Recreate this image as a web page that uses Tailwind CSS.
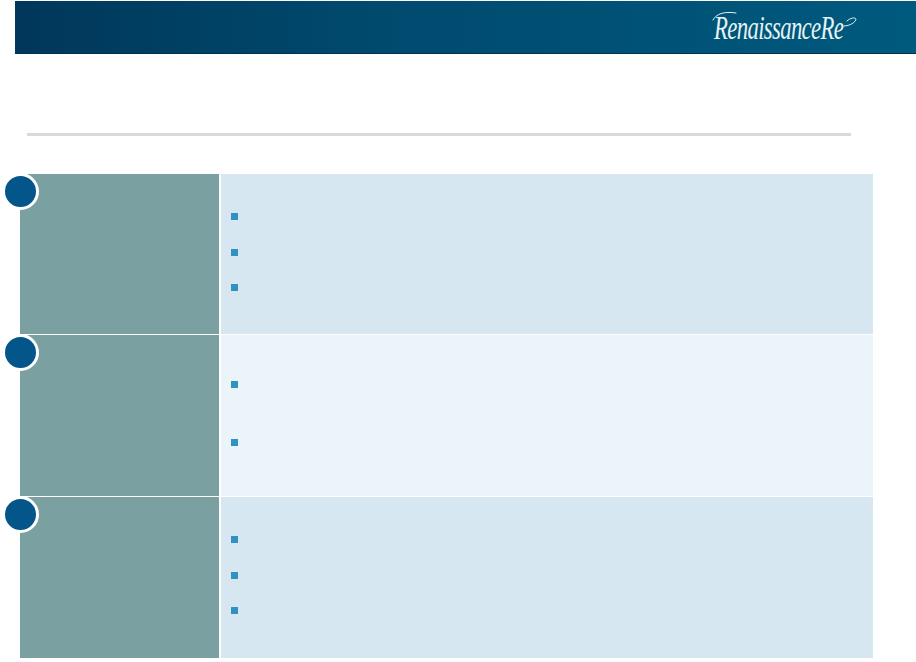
<!DOCTYPE html>
<html lang="en">
  <head>
    <meta charset="UTF-8" />
    <meta name="viewport" content="width=device-width, initial-scale=1.0" />
    <title>RenaissanceRe</title>
    <script src="https://cdn.jsdelivr.net/npm/@tailwindcss/browser@4"></script>
  </head>
  <body class="bg-white w-[916px] h-[662px] overflow-hidden">
    <!-- header bar -->
    <header class="mt-px ml-[15px] h-[53px] flex items-center justify-end bg-gradient-to-r from-[#00375a] via-[#004a6e] via-40% to-[#005a7e] border-b border-[#003350]">
      <div class="relative mr-[58px] mt-[2px] w-[144px] h-[34px]">
        <span class="block origin-left scale-x-[.67] font-['Liberation_Serif',serif] italic text-[34px] leading-[34px] tracking-[-1px] text-[#e4f3f6] whitespace-nowrap">RenaissanceRe</span>
        <!-- swash on the R and the trailing e -->
        <svg class="absolute left-[-2px] top-[-2px]" width="150" height="34" viewBox="0 0 150 34" fill="none" stroke="#e4f3f6" stroke-width="1" stroke-linecap="round">
          <path d="M1 11C4 5 12 2 24 4" />
          <path d="M132 17C138 17 144 13 144 10C143 8 138 9 135 12" />
        </svg>
      </div>
    </header>

    <div class="mt-[79px] ml-[27px] w-[824px] h-[3px] bg-[#d9d9d9]"></div>

    <main class="mt-[38px] ml-[20px] w-[853px] flex flex-col gap-px">
      <section class="relative flex h-[160px]">
        <div class="absolute left-[-18px] top-[-1px] w-[37px] h-[37px] rounded-full bg-[#04568a] border-[3px] border-white"></div>
        <div class="w-[199px] bg-[#7aa0a2]"></div>
        <div class="flex-1 ml-[2px] bg-[#d6e7f1] pl-[10px] pt-[39px] flex flex-col gap-[28.5px]">
          <span class="w-[7px] h-[7px] bg-[#2f92c0]"></span>
          <span class="w-[7px] h-[7px] bg-[#2f92c0]"></span>
          <span class="w-[7px] h-[7px] bg-[#2f92c0]"></span>
        </div>
      </section>
      <section class="relative flex h-[161px]">
        <div class="absolute left-[-18px] top-[-1px] w-[37px] h-[37px] rounded-full bg-[#04568a] border-[3px] border-white"></div>
        <div class="w-[199px] bg-[#7aa0a2]"></div>
        <div class="flex-1 ml-[2px] bg-[#ebf4f9] pl-[10px] pt-[46px] flex flex-col gap-[51px]">
          <span class="w-[7px] h-[7px] bg-[#2f92c0]"></span>
          <span class="w-[7px] h-[7px] bg-[#2f92c0]"></span>
        </div>
      </section>
      <section class="relative flex h-[161px]">
        <div class="absolute left-[-18px] top-[-1px] w-[37px] h-[37px] rounded-full bg-[#04568a] border-[3px] border-white"></div>
        <div class="w-[199px] bg-[#7aa0a2]"></div>
        <div class="flex-1 ml-[2px] bg-[#d6e7f1] pl-[10px] pt-[39px] flex flex-col gap-[28.5px]">
          <span class="w-[7px] h-[7px] bg-[#2f92c0]"></span>
          <span class="w-[7px] h-[7px] bg-[#2f92c0]"></span>
          <span class="w-[7px] h-[7px] bg-[#2f92c0]"></span>
        </div>
      </section>
    </main>
  </body>
</html>
